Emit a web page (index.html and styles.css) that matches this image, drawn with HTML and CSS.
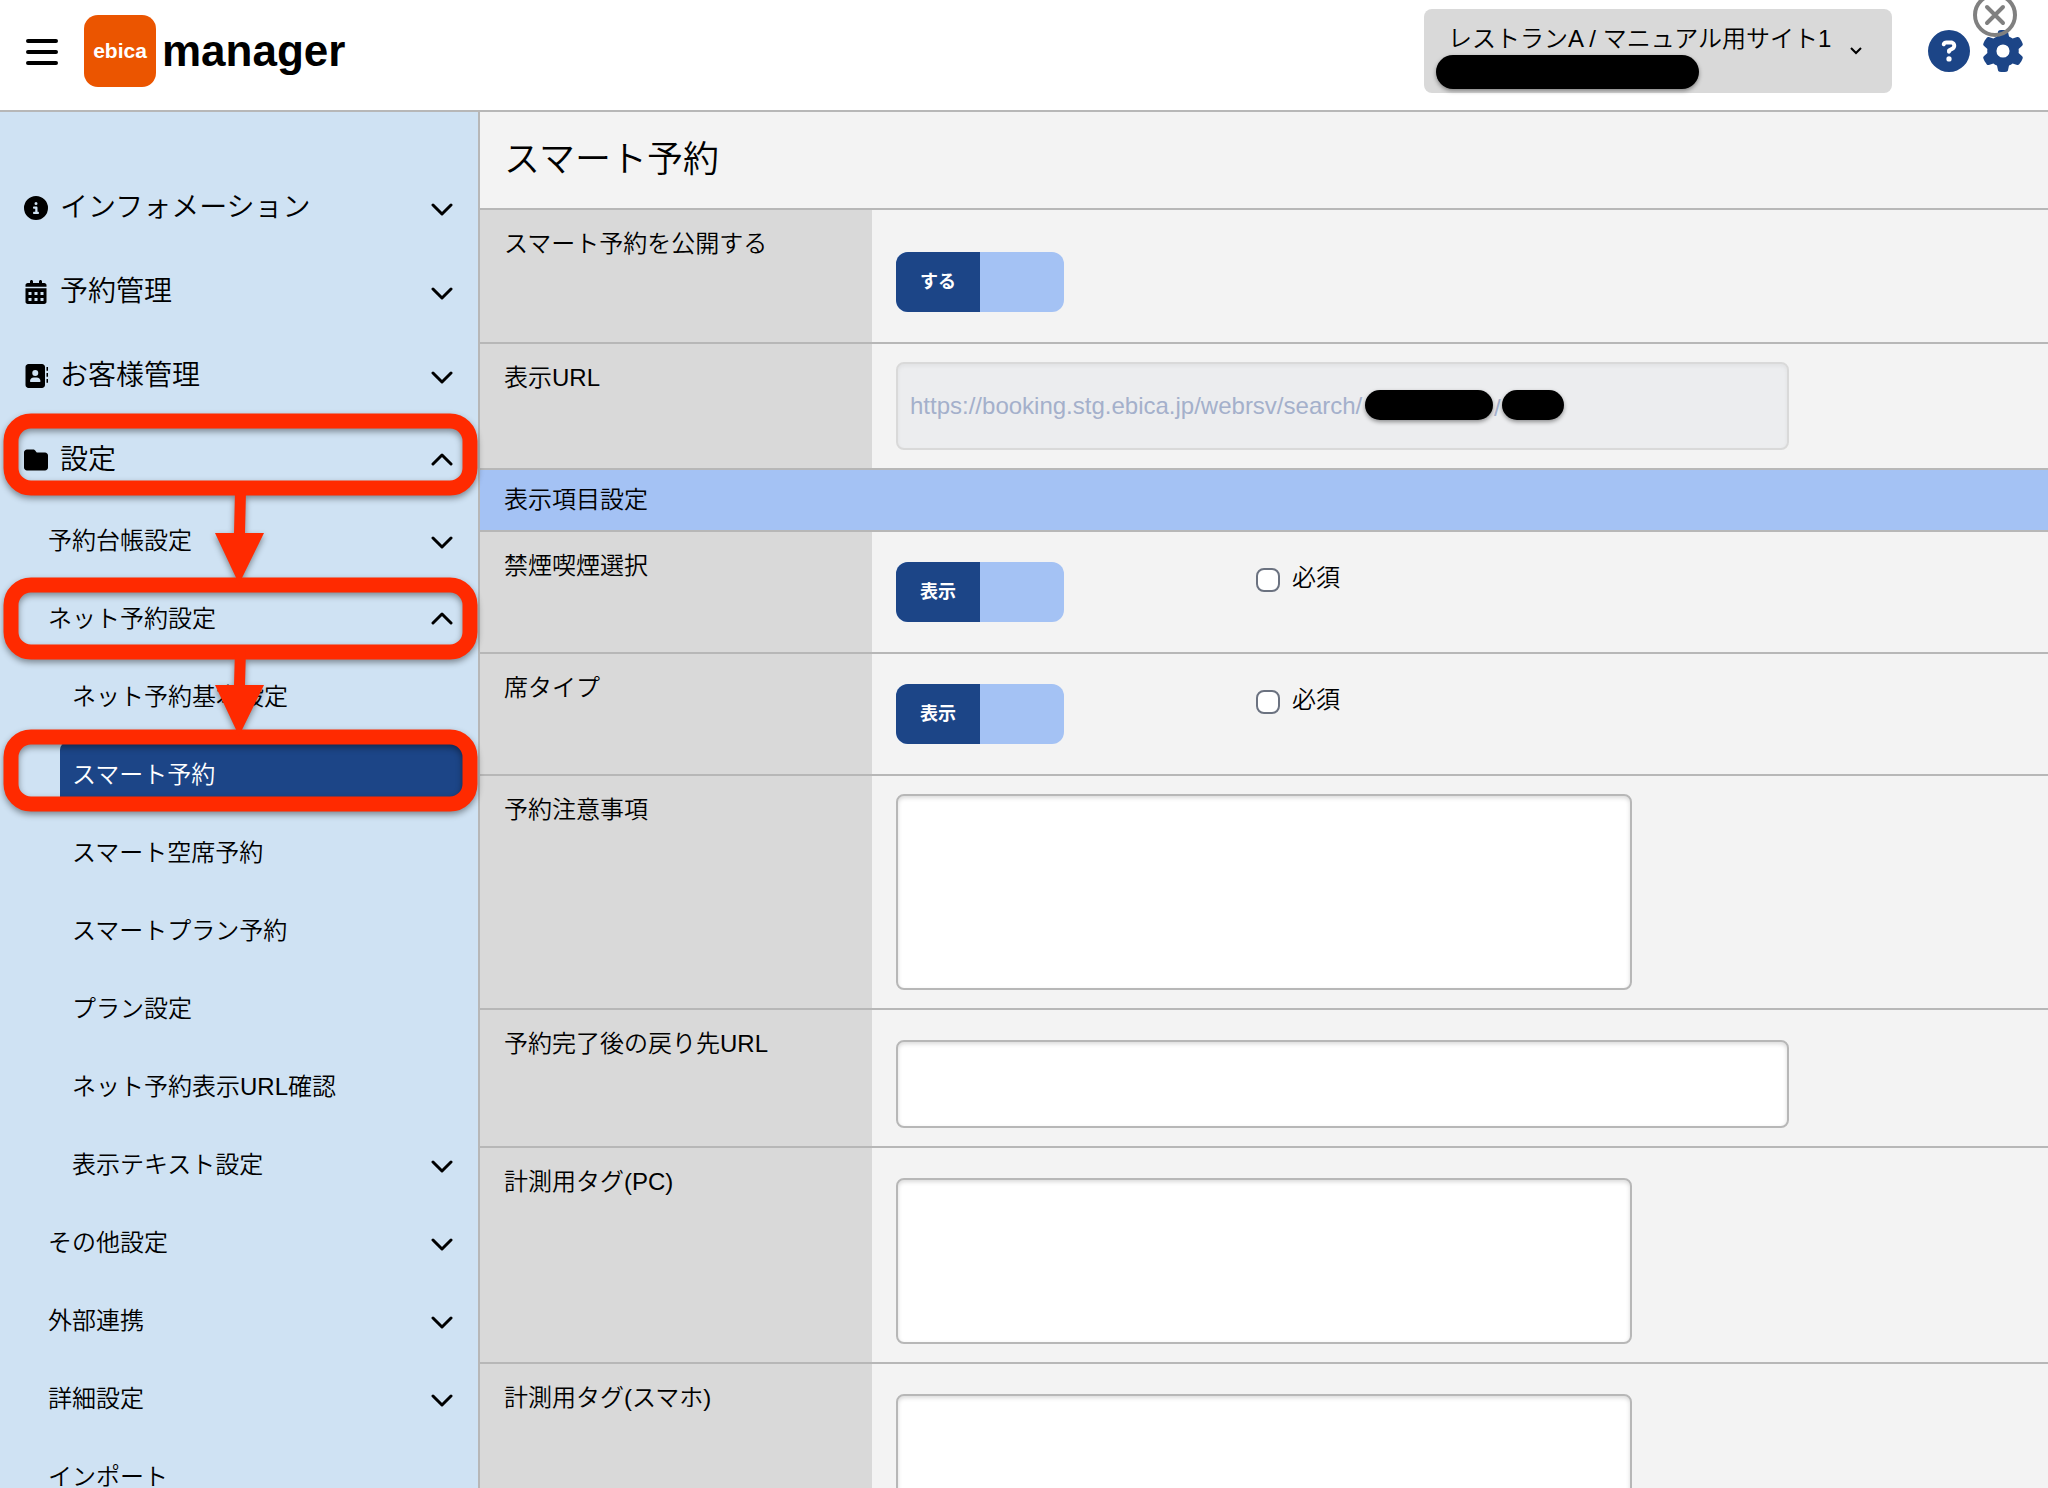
FILE: index.html
```html
<!DOCTYPE html>
<html lang="ja">
<head>
    <meta charset="UTF-8">
    <meta name="viewport" content="width=device-width, initial-scale=1.0">
    <title>ebica manager</title>

    <link rel="stylesheet" href="styles.css">
</head>
<body>
    <!-- アイコン -->
    <svg class="sprite" aria-hidden="true">
        <symbol id="down" viewBox="0 0 22 18"><path d="M2 6l9 9 9-9" fill="none" stroke="currentColor" stroke-width="3" stroke-linecap="round" stroke-linejoin="round"/></symbol>
        <symbol id="up" viewBox="0 0 22 18"><path d="M2 13l9-9 9 9" fill="none" stroke="currentColor" stroke-width="3" stroke-linecap="round" stroke-linejoin="round"/></symbol>
    </svg>

    <header class="header">
        <button type="button" class="menu-btn" aria-label="メニュー">
            <svg width="32" height="30" viewBox="0 0 32 30"><path d="M2 5h28M2 16h28M2 27h28" stroke="#000" stroke-width="4" stroke-linecap="round"/></svg>
        </button>
        <a href="#" class="logo"><span class="logo-mark">ebica</span><span class="logo-text">manager</span></a>

        <button type="button" class="shop">
            <span class="shop-name">レストランA / マニュアル用サイト1<span class="mask mask-shop"></span></span>
            <svg width="12" height="8" viewBox="0 0 12 8"><path d="M1 1l5 5 5-5" fill="none" stroke="#000" stroke-width="2"/></svg>
        </button>
        <a href="#" class="head-icon" aria-label="ヘルプ">
            <svg width="42" height="42" viewBox="0 0 512 512"><path fill="#1c4587" d="M256 512A256 256 0 1 0 256 0a256 256 0 1 0 0 512zM169.800 165.300c7.900-22.300 29.100-37.300 52.800-37.300h58.300c34.900 0 63.100 28.300 63.100 63.100c0 22.600-12.100 43.500-31.700 54.800L280 264.400c-.200 13-10.900 23.600-24 23.600c-13.300 0-24-10.700-24-24V250.500c0-8.600 4.600-16.500 12.100-20.800l44.300-25.400c4.700-2.700 7.600-7.700 7.600-13.100c0-8.400-6.800-15.100-15.100-15.100H222.600c-3.400 0-6.400 2.100-7.500 5.300l-.400 1.200c-4.400 12.500-18.200 19-30.600 14.600s-19-18.200-14.600-30.600l.300-1.300zM224 352a32 32 0 1 1 64 0 32 32 0 1 1-64 0z"/></svg>
        </a>
        <a href="#" class="head-icon" aria-label="設定">
            <svg width="42" height="42" viewBox="0 0 512 512"><path fill="#1c4587" d="M495.900 166.600c3.200 8.700.500 18.400-6.400 24.600l-43.300 39.400c1.100 8.300 1.700 16.800 1.700 25.400s-.600 17.100-1.700 25.400l43.300 39.400c6.900 6.200 9.600 15.900 6.400 24.600c-4.400 11.900-9.700 23.300-15.800 34.300l-4.700 8.100c-6.600 11-14 21.400-22.100 31.200c-5.900 7.200-15.700 9.600-24.500 6.800l-55.700-17.700c-13.400 10.300-28.200 18.900-44 25.400l-12.500 57.100c-2 9.100-9 16.300-18.200 17.800c-13.800 2.300-28 3.500-42.500 3.500s-28.700-1.200-42.500-3.500c-9.200-1.500-16.200-8.700-18.200-17.800l-12.500-57.100c-15.800-6.500-30.600-15.100-44-25.400L83.100 425.900c-8.800 2.800-18.600.300-24.500-6.800c-8.100-9.800-15.500-20.200-22.100-31.200l-4.700-8.100c-6.100-11-11.400-22.400-15.800-34.300c-3.200-8.700-.500-18.400 6.400-24.600l43.300-39.400C64.600 273.100 64 264.600 64 256s.600-17.100 1.700-25.400L22.400 191.200c-6.900-6.200-9.600-15.900-6.400-24.600c4.400-11.900 9.700-23.300 15.800-34.300l4.700-8.100c6.600-11 14-21.400 22.100-31.200c5.900-7.200 15.700-9.600 24.500-6.800l55.700 17.700c13.400-10.300 28.200-18.900 44-25.400l12.500-57.100c2-9.100 9-16.300 18.200-17.800C227.300 1.200 241.500 0 256 0s28.700 1.200 42.500 3.500c9.200 1.500 16.200 8.700 18.200 17.800l12.500 57.100c15.800 6.500 30.600 15.100 44 25.400l55.700-17.700c8.800-2.800 18.600-.300 24.500 6.800c8.100 9.800 15.500 20.200 22.100 31.200l4.700 8.100c6.100 11 11.400 22.400 15.800 34.300zM256 336a80 80 0 1 0 0-160 80 80 0 1 0 0 160z"/></svg>
        </a>
        <button type="button" class="close-btn" aria-label="閉じる">
            <svg width="44" height="44" viewBox="0 0 44 44"><circle cx="22" cy="22" r="20" fill="none" stroke="#808080" stroke-width="4"/><path d="M14 14l16 16M30 14l-16 16" stroke="#808080" stroke-width="4" stroke-linecap="round"/></svg>
        </button>
    </header>

    <div class="wrap">
        <nav class="side">
            <ul class="gnb">
                <li><a href="#">
                    <svg class="ico" viewBox="0 0 512 512"><path d="M256 512A256 256 0 1 0 256 0a256 256 0 1 0 0 512zM216 336h24V272H216c-13.300 0-24-10.700-24-24s10.700-24 24-24h48c13.300 0 24 10.700 24 24v88h8c13.300 0 24 10.700 24 24s-10.700 24-24 24H216c-13.300 0-24-10.700-24-24s10.700-24 24-24zm40-208a32 32 0 1 1 0 64 32 32 0 1 1 0-64z"/></svg>
                    インフォメーション<svg class="arrow"><use href="#down"/></svg></a></li>
                <li><a href="#">
                    <svg class="ico" viewBox="-32 0 512 512"><path fill-rule="evenodd" d="M128 0c17.700 0 32 14.300 32 32V64H288V32c0-17.700 14.300-32 32-32s32 14.300 32 32V64h48c26.500 0 48 21.500 48 48v32H0V112C0 85.500 21.500 64 48 64H96V32c0-17.700 14.300-32 32-32zM0 176H448V464c0 26.500-21.500 48-48 48H48c-26.500 0-48-21.500-48-48V176zM64 256v64h64v-64zM192 256v64h64v-64zM320 256v64h64v-64zM64 384v64h64v-64zM192 384v64h64v-64zM320 384v64h64v-64z"/></svg>
                    予約管理<svg class="arrow"><use href="#down"/></svg></a></li>
                <li><a href="#">
                    <svg class="ico" viewBox="-32 0 512 512"><path fill-rule="evenodd" d="M64 0H352c35 0 64 29 64 64V448c0 35-29 64-64 64H64c-35 0-64-29-64-64V64C0 29 29 0 64 0zM208 256a64 64 0 1 0 0-128 64 64 0 1 0 0 128zM176 288c-44 0-80 36-80 80 0 9 7 16 16 16H304c9 0 16-7 16-16 0-44-36-80-80-80zM448 64h32v80h-32zM448 192h32v80h-32zM448 320h32v80h-32z"/></svg>
                    お客様管理<svg class="arrow"><use href="#down"/></svg></a></li>
                <li><a href="#">
                    <svg class="ico" viewBox="0 0 512 512"><path d="M64 480H448c35.300 0 64-28.700 64-64V160c0-35.300-28.700-64-64-64H288c-10.100 0-19.600-4.700-25.600-12.800L243.200 57.600C231.100 41.500 212.100 32 192 32H64C28.700 32 0 60.700 0 96V416c0 35.300 28.700 64 64 64z"/></svg>
                    設定<svg class="arrow"><use href="#up"/></svg></a></li>
            </ul>
            <ul class="sub">
                <li><a href="#">予約台帳設定<svg class="arrow"><use href="#down"/></svg></a></li>
                <li><a href="#">ネット予約設定<svg class="arrow"><use href="#up"/></svg></a>
                    <ul class="sub2">
                        <li><a href="#">ネット予約基本設定</a></li>
                        <li><a href="#" class="active">スマート予約</a></li>
                        <li><a href="#">スマート空席予約</a></li>
                        <li><a href="#">スマートプラン予約</a></li>
                        <li><a href="#">プラン設定</a></li>
                        <li><a href="#">ネット予約表示URL確認</a></li>
                        <li><a href="#">表示テキスト設定<svg class="arrow"><use href="#down"/></svg></a></li>
                    </ul>
                </li>
                <li><a href="#">その他設定<svg class="arrow"><use href="#down"/></svg></a></li>
                <li><a href="#">外部連携<svg class="arrow"><use href="#down"/></svg></a></li>
                <li><a href="#">詳細設定<svg class="arrow"><use href="#down"/></svg></a></li>
                <li><a href="#">インポート</a></li>
            </ul>

            <!-- 操作手順の赤枠と矢印 -->
            <svg class="guide" width="480" height="420" viewBox="0 0 480 420" aria-hidden="true">
                <g fill="none" stroke="#ff2a00" stroke-width="15">
                    <rect x="11" y="20" width="459" height="67" rx="20"/>
                    <rect x="11" y="184" width="459" height="67" rx="20"/>
                    <rect x="11" y="336" width="459" height="67" rx="20"/>
                </g>
                <path fill="#ff2a00" d="M235 90h11l-1 42h19l-25 51-24-51h19zM235 248h11l-1 36h19l-25 51-24-51h19z"/>
            </svg>
        </nav>

        <main class="content">
            <h1>スマート予約</h1>
            <form class="form">
                <div class="row">
                    <div class="label">スマート予約を公開する</div>
                    <div class="field field-open"><button type="button" class="toggle" aria-pressed="true"><span>する</span></button></div>
                </div>
                <div class="row">
                    <label class="label" for="url">表示URL</label>
                    <div class="field">
                        <div class="url-box">
                            <input type="text" id="url" class="text" value="https://booking.stg.ebica.jp/webrsv/search/" disabled>
                            <div class="masks"><span class="mask mask-id"></span>/<span class="mask mask-no"></span></div>
                        </div>
                    </div>
                </div>
                <h2>表示項目設定</h2>
                <div class="row">
                    <div class="label">禁煙喫煙選択</div>
                    <div class="field field-select">
                        <button type="button" class="toggle" aria-pressed="true"><span>表示</span></button>
                        <label class="check"><input type="checkbox">必須</label>
                    </div>
                </div>
                <div class="row">
                    <div class="label">席タイプ</div>
                    <div class="field field-select">
                        <button type="button" class="toggle" aria-pressed="true"><span>表示</span></button>
                        <label class="check"><input type="checkbox">必須</label>
                    </div>
                </div>
                <div class="row">
                    <label class="label" for="notice">予約注意事項</label>
                    <div class="field"><textarea id="notice" class="notice"></textarea></div>
                </div>
                <div class="row">
                    <label class="label" for="back">予約完了後の戻り先URL</label>
                    <div class="field field-tag"><input type="text" id="back" class="text"></div>
                </div>
                <div class="row">
                    <label class="label" for="tag-pc">計測用タグ(PC)</label>
                    <div class="field field-tag"><textarea id="tag-pc"></textarea></div>
                </div>
                <div class="row">
                    <label class="label" for="tag-sp">計測用タグ(スマホ)</label>
                    <div class="field field-tag"><textarea id="tag-sp"></textarea></div>
                </div>
            </form>
        </main>
    </div>
</body>
</html>
```
FILE: styles.css
```css
* {
    box-sizing: border-box;
}
body {
    margin: 0;
    height: 100vh;
    overflow: hidden;
    display: flex;
    flex-direction: column;
    font-family: "Liberation Sans", "Noto Sans CJK JP", sans-serif;
    font-size: 24px;
    font-weight: 350;
    line-height: 36px;
    color: #000;
    background: #f3f3f3;
}
a {
    color: inherit;
    text-decoration: none;
}
ul {
    list-style: none;
    margin: 0;
    padding: 0;
}
button {
    font: inherit;
    color: inherit;
    border: 0;
    padding: 0;
    background: none;
}
.sprite {
    position: absolute;
    width: 0;
    height: 0;
}

/* header */
.header {
    position: relative;
    flex: none;
    display: flex;
    align-items: center;
    height: 112px;
    padding: 0 24px 8px 26px;
    background: #fff;
    border-bottom: 2px solid #b7b7b7;
}
.header svg {
    display: block;
}
.logo {
    display: flex;
    align-items: center;
    gap: 6px;
    margin-left: 26px;
    font-weight: bold;
}
.logo-mark {
    width: 72px;
    line-height: 72px;
    border-radius: 14px;
    background: #eb5500;
    color: #fff;
    font-size: 21px;
    text-align: center;
}
.logo-text {
    font-size: 44px;
    line-height: 72px;
}
.shop {
    display: flex;
    align-items: center;
    justify-content: space-between;
    width: 468px;
    height: 84px;
    margin-left: auto;
    margin-right: 36px;
    padding: 0 30px 0 24px;
    border-radius: 8px;
    background: #d9d9d9;
}
.shop-name {
    position: relative;
    padding-bottom: 24px;
}
.mask {
    background: #000;
    border-radius: 17px;
    box-shadow: 0 2px 4px rgba(0, 0, 0, .4);
}
.mask-shop {
    position: absolute;
    left: -12px;
    top: 34px;
    width: 263px;
    height: 34px;
}
.head-icon + .head-icon {
    margin-left: 12px;
}
.close-btn {
    position: absolute;
    right: 31px;
    top: -7px;
}

/* sidebar */
.wrap {
    flex: 1;
    min-height: 0;
    display: flex;
}
.side {
    position: relative;
    flex: none;
    width: 480px;
    padding-top: 54px;
    background: #cfe2f3;
    border-right: 2px solid #b7b7b7;
}
.side a {
    display: flex;
    align-items: center;
}
.gnb a {
    height: 84px;
    padding: 0 25px 0 24px;
    font-size: 28px;
}
.ico {
    width: 24px;
    height: 24px;
    margin-right: 12px;
}
.arrow {
    width: 22px;
    height: 18px;
    margin-left: auto;
}
.sub a {
    height: 78px;
    padding: 0 25px 0 48px;
}
.sub2 a {
    margin-left: 60px;
    padding-left: 12px;
}
.sub2 .active {
    color: #fff;
    background: #1c4587;
    border-radius: 8px;
    height: 66px;
    margin-top: 6px;
    margin-bottom: 6px;
    margin-right: 12px;
}
.guide {
    position: absolute;
    left: 0;
    top: 289px;
    filter: drop-shadow(0 3px 3px rgba(0, 0, 0, .4));
}

/* content */
.content {
    flex: 1;
    min-width: 0;
}
h1 {
    margin: 0;
    padding: 24px;
    font-size: 36px;
    font-weight: 350;
    line-height: 48px;
    border-bottom: 2px solid #b7b7b7;
}
h2 {
    margin: 0;
    padding: 12px 24px;
    font-size: 24px;
    font-weight: 350;
    background: #a4c2f4;
    border-bottom: 2px solid #b7b7b7;
}
.row {
    display: flex;
    border-bottom: 2px solid #b7b7b7;
}
.label {
    flex: none;
    width: 392px;
    padding: 16px 24px;
    background: #d9d9d9;
}
.field {
    flex: 1;
    padding: 18px 24px;
}
.field-open {
    padding: 42px 24px 30px;
}
.field-select {
    display: flex;
    gap: 192px;
    padding: 30px 24px;
}
.field-tag {
    padding-top: 30px;
}
.toggle {
    display: block;
    width: 168px;
    height: 60px;
    border-radius: 12px;
    overflow: hidden;
    background: #a4c2f4;
}
.toggle span {
    display: block;
    width: 84px;
    line-height: 60px;
    font-size: 18px;
    font-weight: bold;
    color: #fff;
    background: #1c4587;
}
.check {
    display: flex;
    align-items: flex-start;
    gap: 12px;
    height: 36px;
    line-height: 32px;
}
.check input {
    appearance: none;
    width: 24px;
    height: 24px;
    margin: 6px 0 0;
    border: 2px solid #6b7280;
    border-radius: 8px;
    background: #fff;
}
.text,
textarea {
    display: block;
    border: 2px solid #b7b7b7;
    border-radius: 8px;
    padding: 0 12px;
    font: inherit;
    background: #fff;
    box-shadow: inset 0 2px 4px rgba(0, 0, 0, .15);
}
.text {
    width: 100%;
    max-width: 893px;
    height: 88px;
}
.text:disabled {
    color: #a4b0cb;
    background: #ecedef;
    border-color: #d9d9d9;
    box-shadow: inset 0 2px 4px rgba(0, 0, 0, .05);
}
textarea {
    width: 736px;
    height: 166px;
    resize: none;
}
.notice {
    height: 196px;
}
.url-box {
    position: relative;
}
.masks {
    position: absolute;
    left: 469px;
    top: 28px;
    display: flex;
    gap: 1px;
    color: #a4b0cb;
}
.mask-id {
    width: 128px;
    height: 30px;
}
.mask-no {
    width: 62px;
    height: 30px;
}
```
